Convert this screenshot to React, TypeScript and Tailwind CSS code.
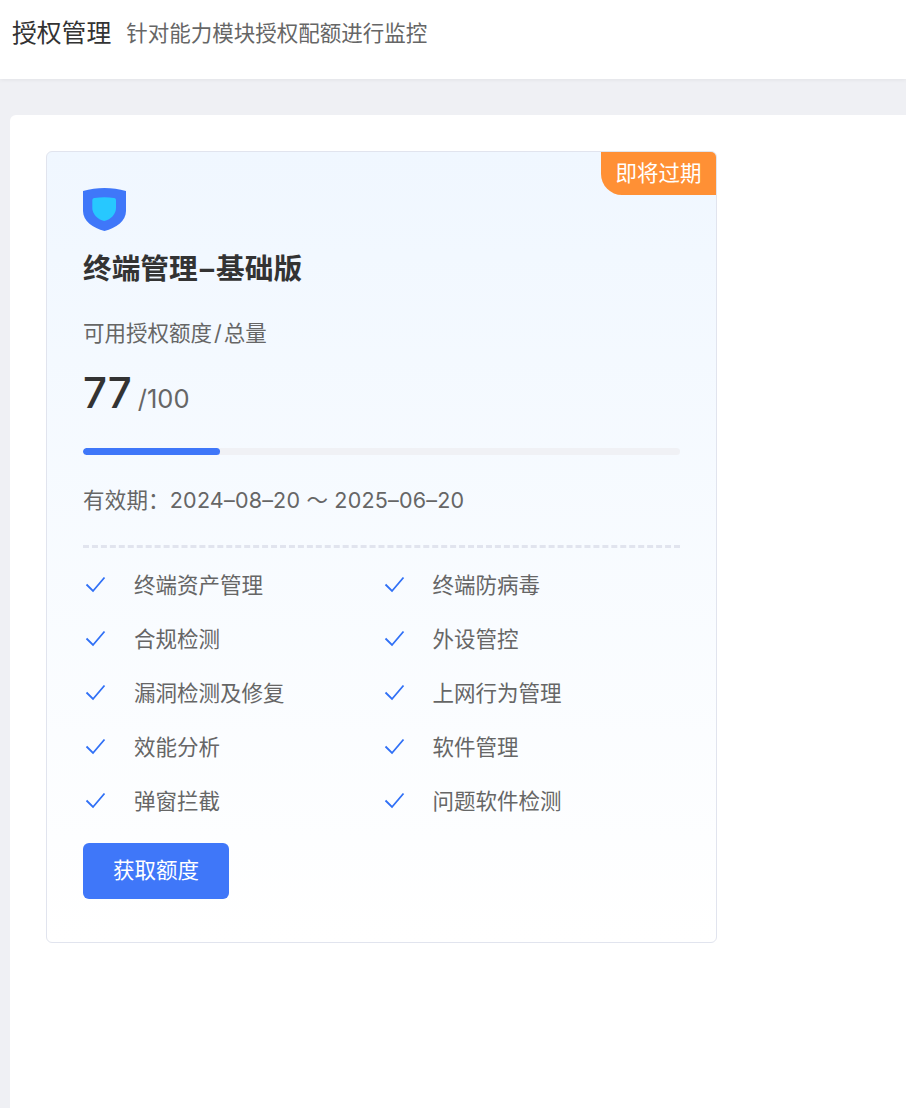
// App.tsx
const features = [
  ["终端资产管理", "终端防病毒"],
  ["合规检测", "外设管控"],
  ["漏洞检测及修复", "上网行为管理"],
  ["效能分析", "软件管理"],
  ["弹窗拦截", "问题软件检测"],
];

const CheckIcon = () => (
  <svg width="21" height="17" viewBox="0 0 21 17" fill="none" className="shrink-0 -mt-[2px]">
    <path d="M1.500 8.500L8 15L19.500 1.500" stroke="#3070f6" strokeWidth="1.800" />
  </svg>
);

const ShieldIcon = () => (
  <svg width="43" height="43" viewBox="0 0 43 43">
    <path
      d="M0 3C7 1 14 0 21.500 0C29 0 36 1 43 3V23C43 33 33 40 21.500 43C10 40 0 33 0 23Z"
      fill="#3f77f9"
    />
    <path
      d="M9.300 12.500C9.300 11 10 10.300 11.500 10C18 9 25 9 31 10C32.500 10.300 33 11 33 12.500V20C33 26 28 31.500 21.200 33C14.500 31.500 9.300 26 9.300 20Z"
      fill="#27c8ff"
    />
  </svg>
);

export default function App() {
  return (
    <div className="min-h-[1108px] bg-[#eff0f4] font-['Inter','Noto_Sans_CJK_SC',sans-serif] overflow-hidden">
      {/* Header */}
      <div className="h-[79px] bg-white flex items-start gap-[15px] pl-3 pt-[14px] shadow-[0_1px_4px_rgba(0,0,0,0.06)]">
        <h1 className="text-[24.800px] leading-[39px] text-[#333333]">授权管理</h1>
        <p className="text-[21.500px] leading-[39px] text-[#666666]">针对能力模块授权配额进行监控</p>
      </div>

      {/* Content */}
      <div className="ml-[10px] mt-9 h-[993px] bg-white rounded-tl-md pl-9 pt-9">
        <div className="relative w-[671px] h-[792px] rounded-md border border-[#e1e4ee] bg-gradient-to-b from-[#f0f7ff] to-white px-9 pt-9 overflow-hidden">
          <span className="absolute top-0 right-0 w-[115px] h-[43px] bg-[#ff9035] rounded-bl-[21px] text-white text-[21.500px] leading-[43px] text-center">
            即将过期
          </span>

          <ShieldIcon />
          <h2 className="mt-[16px] text-[28.700px] leading-[43px] font-bold text-[#333333]">
            终端管理<span className="px-[2px]">–</span>基础版
          </h2>
          <p className="mt-[27px] text-[21.500px] leading-[32px] text-[#666666]">
            可用授权额度<span className="px-[2px]">/</span>总量
          </p>

          <div className="mt-[19px] flex items-baseline gap-[6px] text-[#333333]">
            <span className="text-[42px] leading-[50px] font-medium">77</span>
            <span className="text-[25.500px] text-[#666666]">/100</span>
          </div>

          <div className="mt-[30px] h-[7px] rounded-full bg-[#f0f1f5] overflow-hidden">
            <div className="h-full w-[137px] rounded-full bg-[#3f77f9]" />
          </div>

          <p className="mt-[29px] text-[21.500px] leading-[32px] tracking-[0.2px] text-[#666666]">
            有效期：2024–08–20 ～ 2025–06–20
          </p>

          <div className="mt-[29px] border-t-[3px] border-dashed border-[#e1e4ee]" />

          <div className="mt-[10px] flex flex-col">
            {features.map((row) => (
              <div key={row[0]} className="grid grid-cols-[298.500px_1fr] h-[54px] items-center">
                {row.map((item) => (
                  <div key={item} className="flex items-center gap-[28px] pl-[2px] text-[21.500px] text-[#666666]">
                    <CheckIcon />
                    <span>{item}</span>
                  </div>
                ))}
              </div>
            ))}
          </div>

          <button className="mt-[15px] w-[146px] h-[56px] pb-[2px] rounded-md bg-[#3f77f9] text-white text-[21.500px]">
            获取额度
          </button>
        </div>
      </div>
    </div>
  );
}
